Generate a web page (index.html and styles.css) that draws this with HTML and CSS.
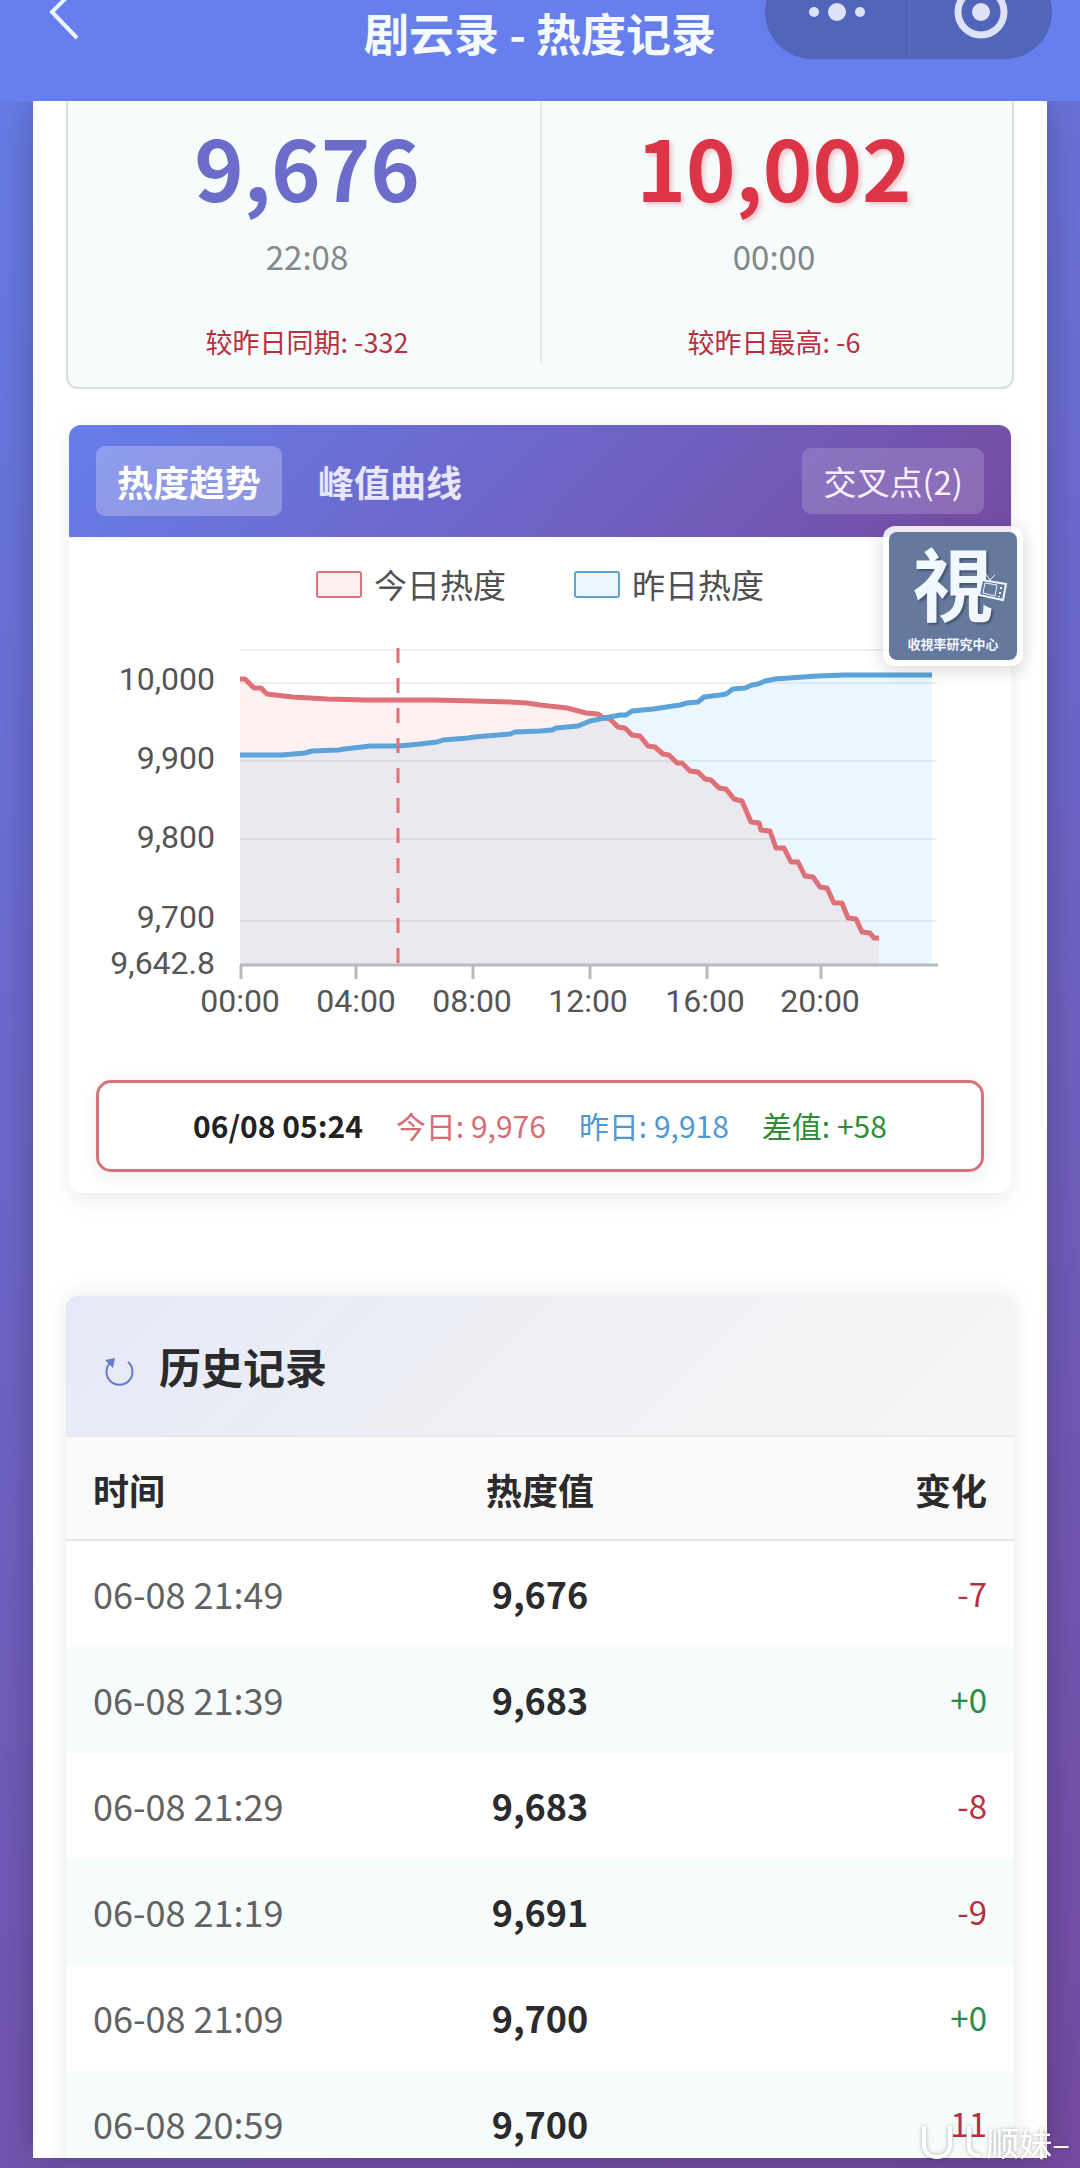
FILE: index.html
```html
<!DOCTYPE html>
<html lang="zh-CN">
<head>
<meta charset="utf-8">
<meta name="viewport" content="width=device-width, initial-scale=1">
<title>剧云录 - 热度记录</title>
<link rel="stylesheet" href="styles.css">
</head>
<body>
<header class="topbar">
  <button class="back" aria-label="返回">
    <svg width="40" height="64" viewBox="0 0 40 64" fill="none" stroke="#eaf4ff" stroke-width="4"><path d="M36 7 11 32l25 26"/></svg>
  </button>
  <h1 class="title">剧云录 - 热度记录</h1>
  <div class="capsule">
    <button class="capsule-btn" aria-label="更多">
      <svg width="60" height="24" viewBox="0 0 60 24" fill="#dde2f7"><circle cx="7" cy="12" r="5"/><circle cx="30" cy="12" r="9"/><circle cx="53" cy="12" r="5"/></svg>
    </button>
    <button class="capsule-btn" aria-label="关闭">
      <svg width="56" height="56" viewBox="0 0 56 56"><circle cx="28" cy="28" r="23" fill="none" stroke="#dde2f7" stroke-width="7"/><circle cx="28" cy="28" r="9" fill="#dde2f7"/></svg>
    </button>
  </div>
</header>
<main class="stage">
  <div class="panel">
    <section class="stats">
      <div class="stat">
        <strong class="stat-value">9,676</strong>
        <span class="stat-time">22:08</span>
        <span class="stat-diff">较昨日同期: -332</span>
      </div>
      <div class="stat">
        <strong class="stat-value peak">10,002</strong>
        <span class="stat-time">00:00</span>
        <span class="stat-diff">较昨日最高: -6</span>
      </div>
    </section>

    <section class="chart-card">
      <div class="chart-head">
        <button class="tab active">热度趋势</button>
        <button class="tab">峰值曲线</button>
        <button class="cross">交叉点(2)</button>
      </div>
      <div class="badge">
        <div class="badge-art">
          <span class="badge-mark">視</span>
          <span class="badge-name">收視率研究中心</span>
          <svg class="badge-tv" width="30" height="32" viewBox="0 0 30 32" fill="none" stroke="#f2f8ff" stroke-width="2"><path d="M4 10 28 14 25 30 1 25Z" fill="#64799c"/><path d="M7 13 19 15 17 26 5 23Z" stroke-width="1"/><path d="M8 4 12 10 17 5" stroke-width="1"/><path d="M23 17v2M22 22v2M21 26v1"/></svg>
        </div>
      </div>
      <div class="legend">
        <span class="key"><i class="swatch today"></i>今日热度</span>
        <span class="key"><i class="swatch yesterday"></i>昨日热度</span>
      </div>
      <svg class="plot" viewBox="69 632 942 408" role="img" aria-label="热度趋势">
        <g stroke="#000" stroke-opacity=".06" stroke-width="2">
          <path d="M240 650H937M240 683H937M240 761H937M240 839H937M240 921H937"/>
        </g>
        <path fill="#4bb0ff" fill-opacity=".11" d="M240 755H282L305 753 312 751 339 750 344 749 362 747 370 746H398L420 744 437 742 443 740 468 738 474 737 510 734 515 732 540 731 552 730 556 728 578 726 590 721 605 718 620 715H626L632 711 653 709 680 705 687 703 698 702 704 697 720 695 726 694 733 689 745 688 752 685 758 684 765 681 775 679 803 677 817 676 845 675H932V965H240Z"/>
        <path fill="#f0503c" fill-opacity=".08" d="M240 679H245L254 688H261L267 694 275 695 293 697 327 699 365 700H434L475 701 510 702 527 703 540 705 567 708 586 713 598 714 602 717 610 719 618 727 625 728 632 735 640 736 648 746 655 747 663 754 669 755 677 763H682L690 771 698 772 705 779 711 780 719 788 726 789 734 799 742 801 751 822 759 823 761 830 770 831 776 848H784L791 862H798L805 876 813 877 820 887 827 888 834 903H842L848 918 856 919 862 932 870 933 874 938H879V965H240Z"/>
        <path class="line today-line" d="M240 679H245L254 688H261L267 694 275 695 293 697 327 699 365 700H434L475 701 510 702 527 703 540 705 567 708 586 713 598 714 602 717 610 719 618 727 625 728 632 735 640 736 648 746 655 747 663 754 669 755 677 763H682L690 771 698 772 705 779 711 780 719 788 726 789 734 799 742 801 751 822 759 823 761 830 770 831 776 848H784L791 862H798L805 876 813 877 820 887 827 888 834 903H842L848 918 856 919 862 932 870 933 874 938H879"/>
        <path class="line yesterday-line" d="M240 755H282L305 753 312 751 339 750 344 749 362 747 370 746H398L420 744 437 742 443 740 468 738 474 737 510 734 515 732 540 731 552 730 556 728 578 726 590 721 605 718 620 715H626L632 711 653 709 680 705 687 703 698 702 704 697 720 695 726 694 733 689 745 688 752 685 758 684 765 681 775 679 803 677 817 676 845 675H932"/>
        <path stroke="#e07078" stroke-width="3" stroke-dasharray="15 15" d="M398 648V965"/>
        <path stroke="#b9b9bf" stroke-width="3" fill="none" d="M240 965H938M241 965V979M356 965V979M473 965V979M590 965V979M707 965V979M821 965V979"/>
        <g class="axis" text-anchor="end">
          <text x="215" y="690">10,000</text><text x="215" y="769">9,900</text><text x="215" y="848">9,800</text><text x="215" y="928">9,700</text><text x="215" y="974">9,642.8</text>
        </g>
        <g class="axis" text-anchor="middle">
          <text x="240" y="1012">00:00</text><text x="356" y="1012">04:00</text><text x="472" y="1012">08:00</text><text x="588" y="1012">12:00</text><text x="705" y="1012">16:00</text><text x="820" y="1012">20:00</text>
        </g>
      </svg>
      <div class="readout">
        <b>06/08 05:24</b>
        <span class="c-today">今日: 9,976</span>
        <span class="c-yesterday">昨日: 9,918</span>
        <span class="c-diff">差值: +58</span>
      </div>
    </section>

    <section class="history">
      <h2 class="history-head">
        <svg class="reload" width="32" height="32" viewBox="0 0 32 32" fill="none" stroke="#6878cc" stroke-width="2"><path d="M25 6A13 13 0 1 1 8 6"/><path d="M2 4 12 2 10 12Z" fill="#6878cc" stroke="none"/></svg>
        历史记录
      </h2>
      <table class="records">
        <thead><tr><th>时间</th><th>热度值</th><th>变化</th></tr></thead>
        <tbody>
          <tr><td>06-08 21:49</td><td>9,676</td><td class="down">-7</td></tr>
          <tr><td>06-08 21:39</td><td>9,683</td><td class="up">+0</td></tr>
          <tr><td>06-08 21:29</td><td>9,683</td><td class="down">-8</td></tr>
          <tr><td>06-08 21:19</td><td>9,691</td><td class="down">-9</td></tr>
          <tr><td>06-08 21:09</td><td>9,700</td><td class="up">+0</td></tr>
          <tr><td>06-08 20:59</td><td>9,700</td><td class="down">11</td></tr>
        </tbody>
      </table>
    </section>
  </div>
</main>
<div class="watermark">
  <svg width="66" height="40" viewBox="0 0 66 40" fill="none" stroke="#fff" stroke-width="4"><path d="M4 4V24Q6 35 17 35T30 24V4M49 4V26Q50 33 60 34"/></svg>
  <span>顺妹–</span>
</div>
</body>
</html>
```
FILE: styles.css
```css
* { box-sizing: border-box; }
body {
  margin: 0;
  height: 100vh;
  display: flex;
  flex-direction: column;
  overflow: hidden;
  position: relative;
  font-family: "Noto Sans CJK SC", sans-serif;
  color: #2b2b2e;
  background: linear-gradient(155deg, #667eea, #764ba2);
}
button { font: inherit; color: inherit; border: 0; margin: 0; padding: 0; background: none; }

.topbar {
  flex: none;
  height: 101px;
  display: grid;
  grid-template-columns: 1fr auto 1fr;
  align-items: start;
  background: #677fed;
  color: #f4faff;
}
.back { justify-self: start; margin: -20px 0 0 41px; line-height: 0; }
.title { margin: 0; padding-top: 10px; font-size: 45px; line-height: 45px; font-weight: 700; }
.capsule {
  justify-self: end;
  width: 287px;
  height: 94px;
  margin: -35px 28px 0 0;
  display: grid;
  grid-template-columns: 1fr 1fr;
  border-radius: 47px;
  background: #5165bb;
}
.capsule-btn { display: grid; place-items: center; }
.capsule-btn + .capsule-btn { border-left: 1px solid #5a6dc4; }

.stage { flex: 1; min-height: 0; padding: 0 33px 10px; overflow: hidden; }
.panel {
  height: 100%;
  padding: 0 33px;
  overflow: hidden;
  background: #fff;
  box-shadow: 0 0 40px rgba(0, 0, 0, .25);
}

.stats {
  display: grid;
  grid-template-columns: 1fr 1fr;
  padding: 0 6px 24px;
  border: 2px solid #d9dddf;
  border-top: 0;
  border-radius: 0 0 12px 12px;
  background: #f6fbfc;
}
.stat { display: flex; flex-direction: column; align-items: center; height: 262px; padding-top: 15px; }
.stat + .stat { border-left: 2px solid #e6eaeb; }
.stat-value { font-size: 84px; line-height: 100px; font-weight: 700; color: #6c6dcb; }
.stat-value.peak { color: #dc3548; text-shadow: 3px 3px 4px rgba(220, 53, 69, .25); }
.stat-time { margin-top: 16px; font-size: 33px; line-height: 48px; color: #858888; }
.stat-diff { margin-top: 42px; font-size: 27px; line-height: 39px; color: #b8303e; }

.chart-card {
  position: relative;
  margin: 36px 3px 0;
  padding-bottom: 21px;
  border-radius: 12px;
  background: #fff;
  box-shadow: 0 6px 24px rgba(0, 0, 0, .08);
}
.chart-head {
  display: flex;
  align-items: center;
  gap: 15px;
  height: 112px;
  padding: 0 27px;
  border-radius: 12px 12px 0 0;
  background: linear-gradient(135deg, #667eea, #764ba2);
}
.tab { padding: 0 21px; border-radius: 9px; font-size: 36px; line-height: 70px; font-weight: 700; color: #e7e6fa; }
.tab.active { color: #fff; background: rgba(255, 255, 255, .25); }
.cross { margin-left: auto; padding: 0 21px; border-radius: 9px; font-size: 33px; line-height: 66px; color: #fbeeff; background: rgba(255, 255, 255, .17); }

.badge {
  position: absolute;
  top: 101px;
  right: -12px;
  width: 140px;
  padding: 6px;
  border-radius: 12px;
  background: rgba(255, 255, 255, .88);
  box-shadow: 0 4px 18px rgba(0, 0, 0, .16);
}
.badge-art {
  position: relative;
  display: flex;
  flex-direction: column;
  align-items: center;
  justify-content: space-between;
  height: 128px;
  padding-bottom: 6px;
  border-radius: 8px;
  color: #f2f8ff;
  background: #64799c;
}
.badge-mark { font-size: 80px; line-height: 96px; font-weight: 700; text-shadow: 2px 2px 2px #46566f; }
.badge-name { font-size: 13px; line-height: 20px; font-weight: 700; }
.badge-tv { position: absolute; right: 9px; top: 38px; }

.legend { display: flex; justify-content: center; gap: 68px; padding-top: 23px; font-size: 33px; line-height: 48px; color: #505050; }
.key { display: flex; align-items: center; gap: 12px; }
.swatch { width: 46px; height: 27px; border: 2px solid; border-radius: 3px; }
.today { border-color: #d4757b; background: #fdeeed; }
.yesterday { border-color: #5ea3cc; background: #ecf8ff; }

.plot { display: block; width: 100%; height: auto; margin-top: 24px; }
.line { fill: none; stroke-width: 5; stroke-linejoin: round; }
.today-line { stroke: #de7077; }
.yesterday-line { stroke: #5ba3d8; }
.axis { font: 400 32px Roboto, sans-serif; fill: #555; }

.readout {
  display: flex;
  justify-content: center;
  gap: 33px;
  margin: 40px 27px 0;
  padding-bottom: 2px;
  border: 3px solid #d5747a;
  border-radius: 15px;
  font-size: 30px;
  line-height: 84px;
  box-shadow: 0 4px 18px rgba(0, 0, 0, .08);
}
.readout b { font-weight: 700; color: #222; }
.c-today { color: #d76d74; }
.c-yesterday { color: #4f98d0; }
.c-diff { color: #2f8c36; }

.history { margin-top: 103px; border-radius: 12px; box-shadow: 0 0 24px rgba(0, 0, 0, .09); }
.history-head {
  display: flex;
  align-items: center;
  gap: 24px;
  height: 141px;
  margin: 0;
  padding: 0 37px;
  border-radius: 12px 12px 0 0;
  border-bottom: 2px solid #e9eaee;
  background: linear-gradient(135deg, #e5e8f8, #eff0f4 50%, #f5f5f5);
  font-size: 42px;
  line-height: 60px;
  font-weight: 700;
}
.reload { margin-top: 12px; }
.records { width: 100%; border-collapse: separate; border-spacing: 0; table-layout: fixed; }
.records th, .records td { height: 106px; padding: 0 27px 2px; font-size: 36px; line-height: 52px; text-align: center; }
.records th { height: 104px; padding-top: 4px; font-weight: 700; background: #fafafa; border-bottom: 2px solid #e6e6e8; }
.records th:first-child, .records td:first-child { text-align: left; }
.records th:last-child, .records td:last-child { text-align: right; }
.records td { font-weight: 700; }
.records td:first-child { font-weight: 400; color: #626262; }
.records td:last-child { font-size: 33px; font-weight: 400; }
.records tbody tr { background: #fff; }
.records tbody tr:nth-child(even) { background: #f6fbfb; }
.records .down { color: #b8303e; }
.records .up { color: #2b8c45; }

.watermark {
  position: absolute;
  right: 10px;
  bottom: 6px;
  display: flex;
  font-size: 33px;
  line-height: 40px;
  color: #fff;
  filter: drop-shadow(0 0 2px rgba(0, 0, 0, .3));
}
```
